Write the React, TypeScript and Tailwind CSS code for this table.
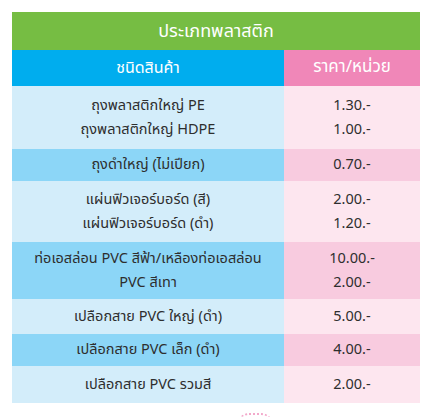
import React from "react";

type Row = {
  names: string[];
  prices: string[];
  dark?: boolean;
  h: string;
};

const rows: Row[] = [
  { names: ["ถุงพลาสติกใหญ่ PE", "ถุงพลาสติกใหญ่ HDPE"], prices: ["1.30.-", "1.00.-"], h: "h-[63px]" },
  { names: ["ถุงดำใหญ่ (ไม่เปียก)"], prices: ["0.70.-"], dark: true, h: "h-[32px]" },
  { names: ["แผ่นฟิวเจอร์บอร์ด (สี)", "แผ่นฟิวเจอร์บอร์ด (ดำ)"], prices: ["2.00.-", "1.20.-"], h: "h-[61px]" },
  { names: ["ท่อเอสล่อน PVC สีฟ้า/เหลืองท่อเอสล่อน", "PVC สีเทา"], prices: ["10.00.-", "2.00.-"], dark: true, h: "h-[57px]" },
  { names: ["เปลือกสาย PVC ใหญ่ (ดำ)"], prices: ["5.00.-"], h: "h-[35px]" },
  { names: ["เปลือกสาย PVC เล็ก (ดำ)"], prices: ["4.00.-"], dark: true, h: "h-[32px]" },
  { names: ["เปลือกสาย PVC รวมสี"], prices: ["2.00.-"], h: "h-[37px]" },
];

export default function App() {
  return (
    <div
      className="w-[432px] h-[417px] overflow-hidden bg-white pt-[12px] px-[12px] text-[#2e2e2e]"
      style={{ fontFamily: "Tahoma, 'Noto Sans Thai', 'Noto Sans', sans-serif" }}
    >
      <div className="w-[408px]">
        <div className="h-[38px] bg-[#76bd43] flex items-center justify-center text-white text-[18px]">
          ประเภทพลาสติก
        </div>
        <div className="flex h-[36px] text-white text-[16px]">
          <div className="w-[272px] bg-[#00adee] flex items-center justify-center">ชนิดสินค้า</div>
          <div className="flex-1 bg-[#f087b8] flex items-center justify-center text-[17px]">ราคา/หน่วย</div>
        </div>
        {rows.map((r, i) => (
          <div key={i} className={`flex text-[14.5px] leading-[24px] ${r.h}`}>
            <div
              className={`w-[272px] flex flex-col items-center justify-center ${
                r.dark ? "bg-[#8cd6f7]" : "bg-[#d3edfa]"
              }`}
            >
              {r.names.map((n) => (
                <div key={n}>{n}</div>
              ))}
            </div>
            <div
              className={`flex-1 flex flex-col items-center justify-center ${
                r.dark ? "bg-[#f8cbdf]" : "bg-[#fde6ef]"
              }`}
            >
              {r.prices.map((p, j) => (
                <div key={j}>{p}</div>
              ))}
            </div>
          </div>
        ))}
        <div className="flex justify-center pt-[10px] pl-[78px]">
          <div className="w-[36px] h-[12px] rounded-t-full border-t-[2px] border-dotted border-[#f3a9cb]" />
        </div>
      </div>
    </div>
  );
}
